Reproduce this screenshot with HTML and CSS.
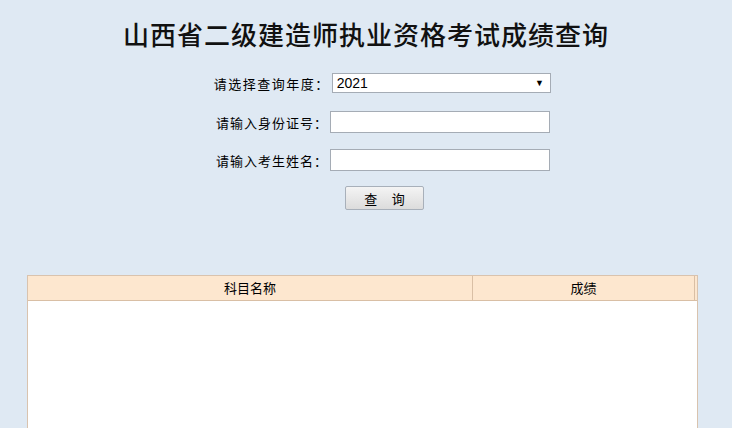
FILE: index.html
```html
<!DOCTYPE html>
<html lang="zh-CN">
<head>
    <meta charset="UTF-8" />
    <title>山西省二级建造师执业资格考试成绩查询</title>
    <link rel="stylesheet" href="styles.css">
</head>
<body>
    <h1 class="title">山西省二级建造师执业资格考试成绩查询</h1>

    <form class="query-form" id="queryForm">
        <div class="row">
            <label for="year" class="wide">请选择查询年度：</label>
            <div class="fake-select" id="year">
                <span>2021</span>
                <span class="arrow">▼</span>
            </div>
        </div>
        <div class="row">
            <label for="idcard">请输入身份证号：</label>
            <input type="text" id="idcard" class="field" />
        </div>
        <div class="row">
            <label for="name">请输入考生姓名：</label>
            <input type="text" id="name" class="field" />
        </div>
        <div class="btn-row">
            <button type="button" class="btn">查&nbsp;&nbsp;&nbsp;&nbsp;&nbsp;询</button>
        </div>
    </form>

    <div class="result">
        <div class="result-head">
            <div class="col-subject">科目名称</div>
            <div class="col-score">成绩</div>
            <div class="col-gap"></div>
        </div>
        <div class="result-body"></div>
    </div>
</body>
</html>
```

FILE: styles.css
```css
/* Basic Styles */
body {
    margin: 0;
    background: #dfe9f3;
    font-family: "Liberation Sans", "Noto Sans CJK SC", sans-serif;
    font-size: 13px;
    color: #000;
    overflow: hidden;
}

.title {
    margin: 0;
    padding-top: 17px;
    height: 41px;
    text-align: center;
    font-family: "Noto Sans CJK SC", serif;
    font-size: 26px;
    font-weight: 500;
    line-height: 34px;
    letter-spacing: 1px;
    color: #111;
}

.query-form {
    width: 340px;
    margin: 15px 0 0 211px;
}

.query-form .row {
    display: flex;
    align-items: center;
    height: 20px;
    margin-bottom: 18px;
}

.query-form .row + .row {
    height: 22px;
    margin-bottom: 16px;
}

.query-form label {
    width: 117px;
    text-align: right;
    padding-right: 2px;
    letter-spacing: 1px;
    font-family: "Noto Sans CJK SC", sans-serif;
    font-size: 13px;
    white-space: nowrap;
}

.query-form label.wide {
    letter-spacing: 1.5px;
    padding-right: 0;
    width: 119px;
}

.fake-select {
    display: flex;
    justify-content: space-between;
    align-items: center;
    box-sizing: border-box;
    width: 220px;
    height: 20px;
    margin-left: 2px;
    padding: 0 6px 0 4px;
    background: #fff;
    border: 1px solid #a5acb5;
    font-size: 14px;
}

.fake-select .arrow {
    font-size: 9px;
}

.field {
    box-sizing: border-box;
    width: 220px;
    height: 22px;
    margin: 0;
    border: 1px solid #a5acb5;
    background: #fff;
}

.btn-row {
    padding-left: 134px;
    margin-top: -1px;
}

.btn {
    width: 79px;
    height: 24px;
    border: 1px solid #a8b0ba;
    border-radius: 2px;
    background: linear-gradient(#f4f4f4, #dcdcdc);
    font-family: "Noto Sans CJK SC", sans-serif;
    font-size: 13px;
    color: #000;
    padding: 0;
}

.result {
    width: 669px;
    margin: 65px 0 0 27px;
    border-left: 1px solid #d9c3ae;
    border-right: 1px solid #d9c3ae;
    border-top: 1px solid #d9c3ae;
    background: #fff;
}

.result-head {
    display: flex;
    height: 24px;
    background: #fde7cf;
    border-bottom: 1px solid #d9bfa5;
    font-family: "Noto Sans CJK SC", sans-serif;
    font-size: 13px;
    line-height: 24px;
}

.col-subject {
    width: 444px;
    text-align: center;
    border-right: 1px solid #d9bfa5;
}

.col-score {
    flex: 1;
    text-align: center;
    border-right: 1px solid #d9bfa5;
}

.col-gap {
    width: 2px;
}

.result-body {
    height: 200px;
}
```
